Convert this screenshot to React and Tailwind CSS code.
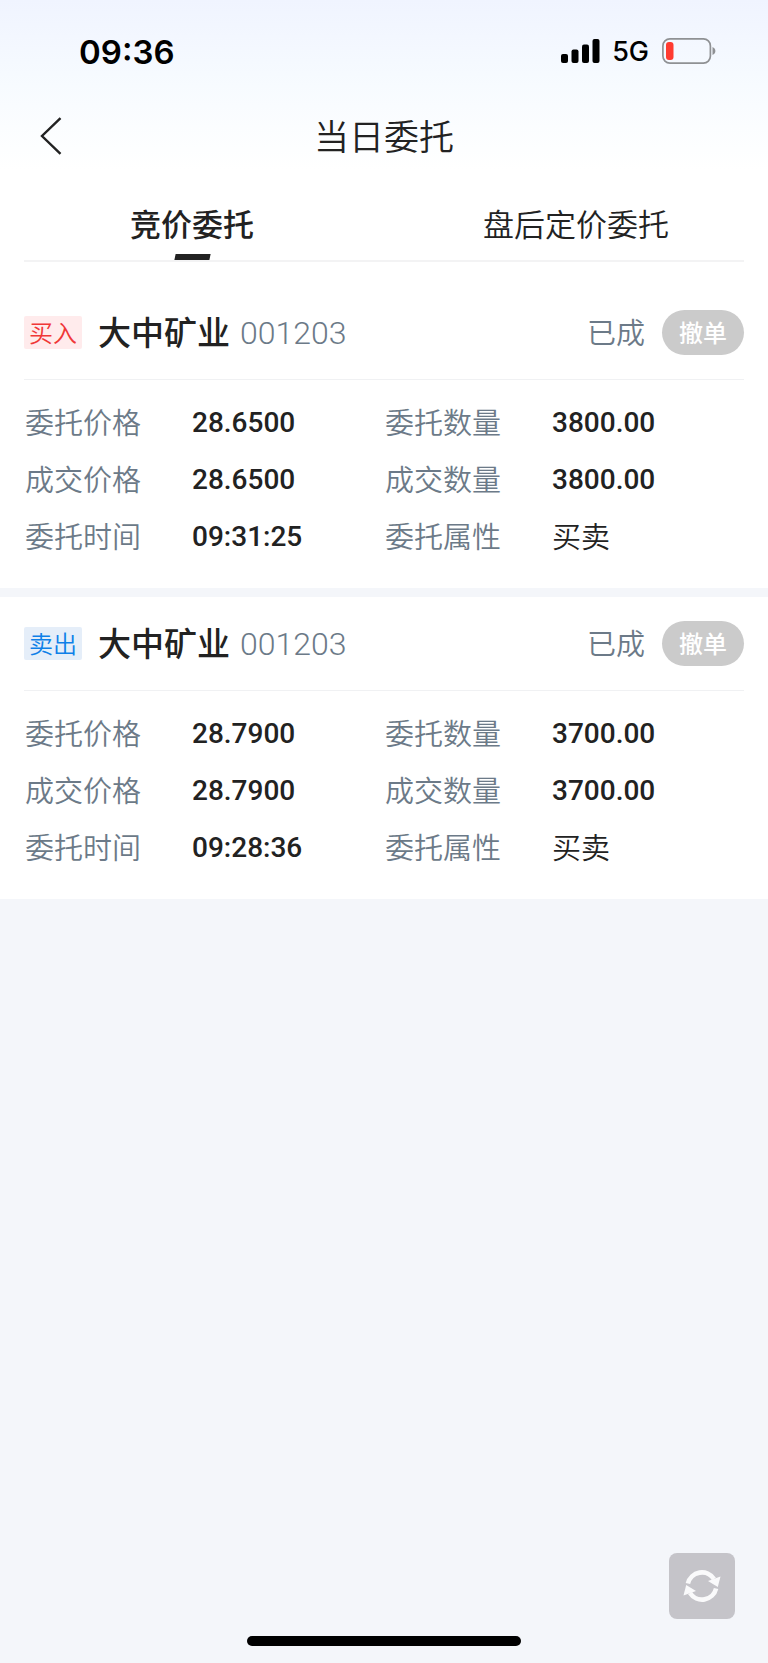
import { useState } from "react";

const tabs = [
  { key: "bidding", label: "竞价委托" },
  { key: "afterHours", label: "盘后定价委托" },
];

const orders = [
  {
    id: 1,
    side: "买入",
    name: "大中矿业",
    code: "001203",
    status: "已成",
    fields: [
      { label: "委托价格", value: "28.6500" },
      { label: "委托数量", value: "3800.00" },
      { label: "成交价格", value: "28.6500" },
      { label: "成交数量", value: "3800.00" },
      { label: "委托时间", value: "09:31:25" },
      { label: "委托属性", value: "买卖", isText: true },
    ],
  },
  {
    id: 2,
    side: "卖出",
    name: "大中矿业",
    code: "001203",
    status: "已成",
    fields: [
      { label: "委托价格", value: "28.7900" },
      { label: "委托数量", value: "3700.00" },
      { label: "成交价格", value: "28.7900" },
      { label: "成交数量", value: "3700.00" },
      { label: "委托时间", value: "09:28:36" },
      { label: "委托属性", value: "买卖", isText: true },
    ],
  },
];

const SignalIcon = () => (
  <svg className="w-[39px] h-6" viewBox="0 0 39 24" fill="#000">
    <rect x="0" y="15" width="7" height="9" rx="2" />
    <rect x="10.5" y="10.5" width="7" height="13.5" rx="2" />
    <rect x="21" y="5.5" width="7" height="18.5" rx="2" />
    <rect x="31.5" y="0" width="7" height="24" rx="2" />
  </svg>
);

const BatteryIcon = () => (
  <svg className="w-[54px] h-[26px]" viewBox="0 0 54 26" fill="none">
    <rect x="0.9" y="0.9" width="47.5" height="24.2" rx="7" stroke="#8f9194" strokeWidth="1.7" />
    <rect x="4" y="4" width="7.5" height="18" rx="3" fill="#ff3b30" />
    <path d="M50.5 9v8c1.7-.7 2.9-2.2 2.9-4s-1.2-3.300-2.900-4z" fill="#8f9194" />
  </svg>
);

const BackIcon = () => (
  <svg className="w-[22px] h-[38px]" viewBox="0 0 22 38" fill="none" stroke="#222" strokeWidth="2.4">
    <path d="M20.500 1.200L2 19l18.500 17.800" />
  </svg>
);

const RefreshIcon = () => (
  <svg className="w-[38px] h-9" viewBox="0 0 38 36" fill="none">
    <path d="M4.900 15.500A14.400 14.400 0 0 1 31 11" stroke="#fafafb" strokeWidth="4.600" />
    <path d="M33.100 20.500A14.400 14.400 0 0 1 7 25" stroke="#fafafb" strokeWidth="4.600" />
    <path d="M37.500 8.500L34.800 19L25 13z" fill="#fafafb" />
    <path d="M.5 27.500L3.200 17L13 23z" fill="#fafafb" />
  </svg>
);

function StatusBar() {
  return (
    <div className="h-[102px] pl-[79px] pr-[52px] flex items-center justify-between text-black font-['Inter',sans-serif]">
      <span className="pt-0.5 text-[33px] leading-10 font-semibold">09:36</span>
      <div className="flex items-center">
        <SignalIcon />
        <span className="pt-0.5 ml-3 mr-[13px] text-[27px] leading-8 font-medium">5G</span>
        <BatteryIcon />
      </div>
    </div>
  );
}

function OrderCard({ order }) {
  const isBuy = order.side === "买入";
  return (
    <section className="bg-white px-6">
      <div className="h-[94px] flex items-center border-b border-[#f0f1f3]">
        <span className={`px-[5px] pb-0.5 h-[33px] flex items-center rounded-xs text-2xl font-[350] ${isBuy ? "bg-[#ffebec] text-[#f03737]" : "bg-[#e5eef9] text-[#0f80e8]"}`}>
          {order.side}
        </span>
        <h2 className="ml-4 pb-1 text-[33px] leading-10 font-medium">{order.name}</h2>
        <span className="ml-[10px] text-[32px] leading-10 text-[#6c7a88] font-light font-['Roboto',sans-serif]">{order.code}</span>
        <span className="ml-auto pb-1 text-[29px] leading-10 text-[#6c7a88] font-[350]">{order.status}</span>
        <button type="button" disabled className="ml-[17px] pb-0.5 w-[82px] h-[45px] rounded-full bg-[#cbcbcb] text-white text-[24px] leading-8 font-medium">
          撤单
        </button>
      </div>
      <dl className="grid grid-cols-2 pt-[14px] pb-[23px]">
        {order.fields.map((field) => (
          <div key={field.label} className="h-[57px] flex items-center text-[29px] leading-10">
            <dt className="w-[168px] pl-px pb-1 text-[#6c7a88] font-[350]">{field.label}</dt>
            <dd className={field.isText ? "pb-1 font-[350]" : "text-[28px] font-medium font-['Roboto',sans-serif]"}>{field.value}</dd>
          </div>
        ))}
      </dl>
    </section>
  );
}

export default function App() {
  const [activeTab, setActiveTab] = useState("bidding");

  return (
    <div className="relative min-h-screen flex flex-col bg-[#f4f6fa] text-[#222] font-['Noto_Sans_CJK_SC',sans-serif]">
      <div className="bg-white">
        <div className="bg-linear-to-b from-[#f0f4ff] via-[#f7fbff] to-white">
          <StatusBar />
          <header className="h-[68px] px-10 grid grid-cols-[1fr_auto_1fr] items-center">
            <button type="button" aria-label="返回" className="justify-self-start">
              <BackIcon />
            </button>
            <h1 className="pb-0.5 text-[35px] leading-10 font-[350]">当日委托</h1>
          </header>
        </div>
        <nav role="tablist" className="h-[90px] grid grid-cols-2">
          {tabs.map((tab) => (
            <button
              key={tab.key}
              type="button"
              role="tab"
              aria-selected={activeTab === tab.key}
              onClick={() => setActiveTab(tab.key)}
              className={`pt-[30px] flex flex-col items-center justify-between text-[31px] leading-[46px] ${activeTab === tab.key ? "font-medium" : "font-[350]"}`}
            >
              {tab.label}
              {activeTab === tab.key && <span className="w-[35px] h-[6px] -skew-x-12 bg-[#222]" />}
            </button>
          ))}
        </nav>
        <div className="mx-6 h-[2px] bg-[#f3f3f4]" />
      </div>

      <main className="pt-6 bg-white">
        <OrderCard order={orders[0]} />
        <div className="h-[9px] bg-[#f4f6fa]" />
        <OrderCard order={orders[1]} />
      </main>

      <div className="mt-auto flex flex-col pb-[17px]">
        <button type="button" aria-label="刷新" className="mr-[33px] mb-[17px] self-end w-[66px] h-[66px] flex items-center justify-center rounded-lg bg-[#c5c4c9]">
          <RefreshIcon />
        </button>
        <div className="self-center w-[274px] h-[10px] rounded-full bg-black" />
      </div>
    </div>
  );
}
